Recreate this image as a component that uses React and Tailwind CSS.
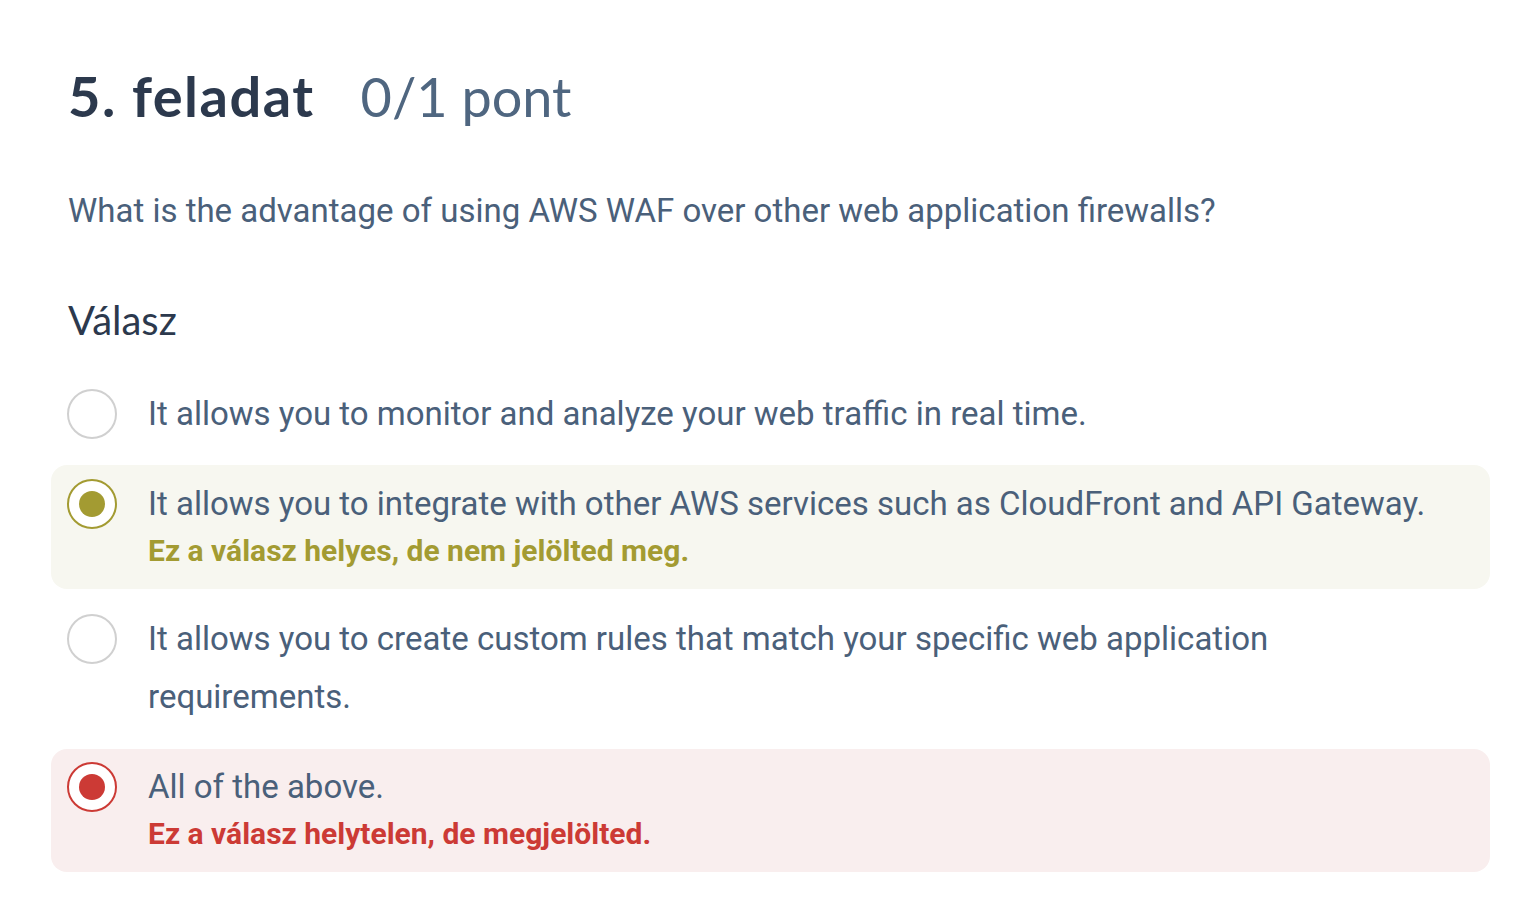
import React from 'react';

const options = [
  {
    text: 'It allows you to monitor and analyze your web traffic in real time.',
    state: 'none',
    wrap: 'pt-[10px] pb-[22px]',
  },
  {
    text: 'It allows you to integrate with other AWS services such as CloudFront and API Gateway.',
    state: 'correct',
    note: 'Ez a válasz helyes, de nem jelölted meg.',
    wrap: 'pt-[10px] pb-[20px]',
  },
  {
    text: 'It allows you to create custom rules that match your specific web application requirements.',
    state: 'none',
    wrap: 'pt-[21px] pb-[23px]',
  },
  {
    text: 'All of the above.',
    state: 'wrong',
    note: 'Ez a válasz helytelen, de megjelölted.',
    wrap: 'pt-[9px] pb-[20px]',
  },
];

const Radio = ({ state }) => {
  if (state === 'correct') {
    return (
      <div className="w-[50px] h-[50px] shrink-0 rounded-full border-2 border-[#a39b32] bg-white flex items-center justify-center">
        <div className="w-[26px] h-[26px] rounded-full bg-[#a39b32]"></div>
      </div>
    );
  }
  if (state === 'wrong') {
    return (
      <div className="w-[50px] h-[50px] shrink-0 rounded-full border-2 border-[#cc3a35] bg-white flex items-center justify-center">
        <div className="w-[26px] h-[26px] rounded-full bg-[#cc3a35]"></div>
      </div>
    );
  }
  return <div className="w-[50px] h-[50px] shrink-0 rounded-full border-2 border-[#d0d0d0] bg-white"></div>;
};

export default function App() {
  return (
    <div className="min-h-screen bg-white pl-[51px] pr-[48px] pt-[60px] font-['Roboto',sans-serif]">
      <div className="pl-[17px] flex items-baseline gap-[46px] font-['Lato',sans-serif]">
        <h1 className="text-[56px] leading-[72px] font-bold tracking-[1.5px] text-[#2c394d]">5. feladat</h1>
        <span className="text-[54px] leading-[72px] text-[#4f6680]">0/1 pont</span>
      </div>

      <p className="pl-[17px] mt-[56px] text-[33px] leading-[44px] text-[#4a607a]">
        What is the advantage of using AWS WAF over other web application firewalls?
      </p>

      <h2 className="pl-[17px] mt-[61px] text-[40px] leading-[52px] text-[#2c394d] font-['Lato',sans-serif]">Válasz</h2>

      <div className="mt-[29px] flex flex-col">
        {options.map((opt, i) => (
          <div
            key={i}
            className={`flex gap-[31px] pl-4 pr-[40px] rounded-2xl ${opt.wrap} ${
              opt.state === 'correct'
                ? 'bg-[#f7f7f0]'
                : opt.state === 'wrong'
                ? 'bg-[#f9eeee]'
                : ''
            }`}
          >
            <div className="pt-[4px]">
              <Radio state={opt.state} />
            </div>
            <div className="flex flex-col">
              <span className="text-[33px] leading-[58px] text-[#4a607a]">{opt.text}</span>
              {opt.note && (
                <span
                  className={`text-[30px] leading-[36px] font-bold ${
                    opt.state === 'correct' ? 'text-[#a39b32]' : 'text-[#cc3a35]'
                  }`}
                >
                  {opt.note}
                </span>
              )}
            </div>
          </div>
        ))}
      </div>
    </div>
  );
}
